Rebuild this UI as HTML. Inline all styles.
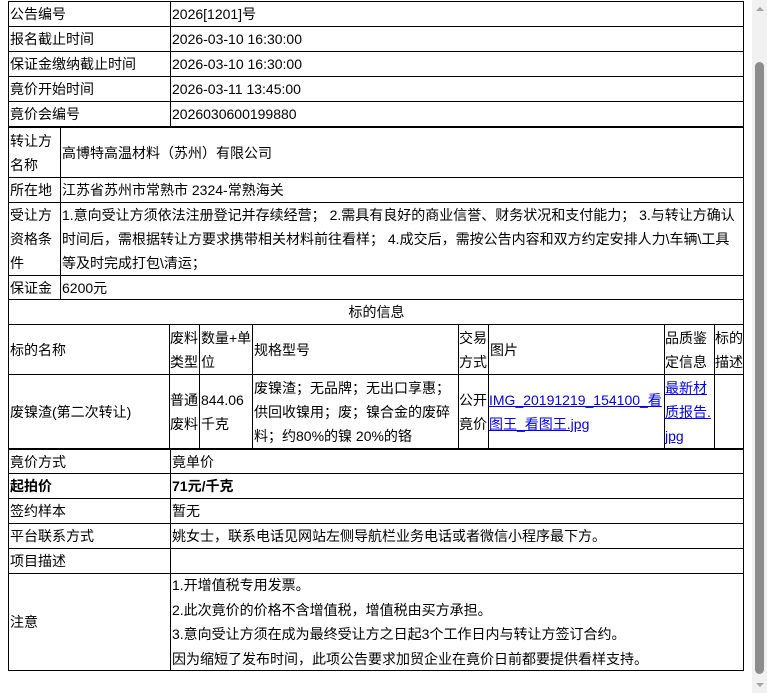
<!DOCTYPE html>
<html><head><meta charset="utf-8"><style>
body{margin:0;width:767px;height:693px;overflow:hidden;background:#fff;position:relative;font-family:"Liberation Sans","Noto Sans CJK SC",sans-serif;font-size:14px;color:#000}
.c{position:absolute;border:1px solid #000;box-sizing:border-box;display:flex;align-items:center;padding-left:1px;line-height:24px;overflow:hidden}
.ctr{justify-content:center}
.nw{white-space:nowrap;padding-left:0}
a{color:#00e;text-decoration:underline}
.sb{position:absolute;left:752px;top:0;width:15px;height:693px;background:#f1f1f1}
.th{position:absolute;left:755px;top:62px;width:9px;height:612px;background:#8c8c8c;border-radius:5px}
</style></head><body>
<div class="c" style="left:8px;top:1px;width:163px;height:26px">公告编号</div>
<div class="c" style="left:170px;top:1px;width:574px;height:26px">2026[1201]号</div>
<div class="c" style="left:8px;top:26px;width:163px;height:26px">报名截止时间</div>
<div class="c" style="left:170px;top:26px;width:574px;height:26px">2026-03-10 16:30:00</div>
<div class="c" style="left:8px;top:51px;width:163px;height:26px">保证金缴纳截止时间</div>
<div class="c" style="left:170px;top:51px;width:574px;height:26px">2026-03-10 16:30:00</div>
<div class="c" style="left:8px;top:76px;width:163px;height:26px">竟价开始时间</div>
<div class="c" style="left:170px;top:76px;width:574px;height:26px">2026-03-11 13:45:00</div>
<div class="c" style="left:8px;top:101px;width:163px;height:26px">竟价会编号</div>
<div class="c" style="left:170px;top:101px;width:574px;height:26px">2026030600199880</div>
<div class="c" style="left:8px;top:127px;width:53px;height:51px">转让方<br>名称</div>
<div class="c" style="left:60px;top:127px;width:684px;height:51px">高博特高温材料（苏州）有限公司</div>
<div class="c" style="left:8px;top:177px;width:53px;height:26px">所在地</div>
<div class="c" style="left:60px;top:177px;width:684px;height:26px">江苏省苏州市常熟市 2324-常熟海关</div>
<div class="c" style="left:8px;top:202px;width:53px;height:74px">受让方<br>资格条<br>件</div>
<div class="c" style="left:60px;top:202px;width:684px;height:74px">1.意向受让方须依法注册登记并存续经营； 2.需具有良好的商业信誉、财务状况和支付能力； 3.与转让方确认时间后，需根据转让方要求携带相关材料前往看样； 4.成交后，需按公告内容和双方约定安排人力\车辆\工具等及时完成打包\清运；</div>
<div class="c" style="left:8px;top:275px;width:53px;height:25px">保证金</div>
<div class="c" style="left:60px;top:275px;width:684px;height:25px">6200元</div>
<div class="c ctr" style="left:8px;top:299px;width:736px;height:26px">标的信息</div>
<div class="c" style="left:8px;top:324px;width:162px;height:51px">标的名称</div>
<div class="c nw" style="left:169px;top:324px;width:31px;height:51px">废料<br>类型</div>
<div class="c" style="left:199px;top:324px;width:54px;height:51px">数量+单<br>位</div>
<div class="c" style="left:252px;top:324px;width:207px;height:51px">规格型号</div>
<div class="c nw" style="left:458px;top:324px;width:31px;height:51px">交易<br>方式</div>
<div class="c" style="left:488px;top:324px;width:177px;height:51px">图片</div>
<div class="c nw" style="left:664px;top:324px;width:51px;height:51px">品质鉴<br>定信息</div>
<div class="c nw" style="left:714px;top:324px;width:30px;height:51px">标的<br>描述</div>
<div class="c" style="left:8px;top:374px;width:162px;height:75px">废镍渣(第二次转让)</div>
<div class="c nw" style="left:169px;top:374px;width:31px;height:75px">普通<br>废料</div>
<div class="c" style="left:199px;top:374px;width:54px;height:75px">844.06<br>千克</div>
<div class="c" style="left:252px;top:374px;width:207px;height:75px">废镍渣；无品牌；无出口享惠；<br>供回收镍用；废；镍合金的废碎<br>料；约80%的镍 20%的铬</div>
<div class="c nw" style="left:458px;top:374px;width:31px;height:75px">公开<br>竟价</div>
<div class="c nw" style="left:488px;top:374px;width:177px;height:75px"><a>IMG_20191219_154100_看<br>图王_看图王.jpg</a></div>
<div class="c nw" style="left:664px;top:374px;width:51px;height:75px"><a>最新材<br>质报告.<br>jpg</a></div>
<div class="c" style="left:714px;top:374px;width:30px;height:75px"></div>
<div class="c" style="left:8px;top:449px;width:163px;height:25px">竟价方式</div>
<div class="c" style="left:170px;top:449px;width:574px;height:25px">竟单价</div>
<div class="c" style="left:8px;top:473px;width:163px;height:26px;font-weight:bold">起拍价</div>
<div class="c" style="left:170px;top:473px;width:574px;height:26px;font-weight:bold">71元/千克</div>
<div class="c" style="left:8px;top:498px;width:163px;height:26px">签约样本</div>
<div class="c" style="left:170px;top:498px;width:574px;height:26px">暂无</div>
<div class="c" style="left:8px;top:523px;width:163px;height:26px">平台联系方式</div>
<div class="c" style="left:170px;top:523px;width:574px;height:26px">姚女士，联系电话见网站左侧导航栏业务电话或者微信小程序最下方。</div>
<div class="c" style="left:8px;top:548px;width:163px;height:26px">项目描述</div>
<div class="c" style="left:170px;top:548px;width:574px;height:26px"></div>
<div class="c" style="left:8px;top:573px;width:163px;height:98px">注意</div>
<div class="c" style="left:170px;top:573px;width:574px;height:98px;line-height:24.5px">1.开增值税专用发票。<br>2.此次竟价的价格不含增值税，增值税由买方承担。<br>3.意向受让方须在成为最终受让方之日起3个工作日内与转让方签订合约。<br>因为缩短了发布时间，此项公告要求加贸企业在竟价日前都要提供看样支持。</div>
<div class="sb"></div><div class="th"></div>
<div style="position:absolute;left:756px;top:7px;width:0;height:0;border-left:4px solid transparent;border-right:4px solid transparent;border-bottom:4px solid #a3a3a3"></div>
<div style="position:absolute;left:756px;top:683px;width:0;height:0;border-left:4px solid transparent;border-right:4px solid transparent;border-top:4px solid #a3a3a3"></div>
</body></html>
